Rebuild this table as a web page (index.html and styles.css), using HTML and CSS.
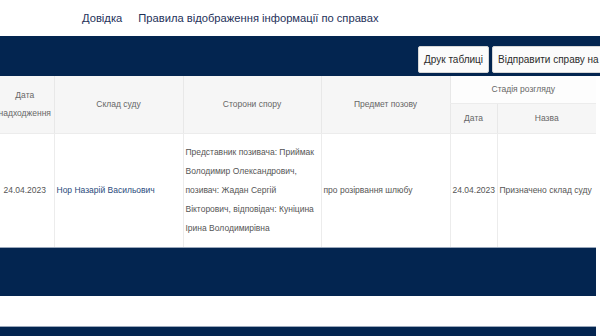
FILE: index.html
```html
<!DOCTYPE html>
<html lang="uk">
<head>
<meta charset="utf-8">
<link rel="stylesheet" href="styles.css">
</head>
<body>
<nav class="topnav">
  <a class="toplink" href="#">Довідка</a>
  <a class="toplink" href="#">Правила відображення інформації по справах</a>
</nav>
<div class="toolbar">
  <button class="btn">Друк таблиці</button>
  <button class="btn btn-wide">Відправити справу на</button>
</div>
<div class="tablewrap">
  <table class="cases">
    <colgroup>
      <col class="c1"><col class="c2"><col class="c3"><col class="c4"><col class="c5"><col class="c6">
    </colgroup>
    <thead>
      <tr class="hr1">
        <th rowspan="2" class="hgrey">Дата<br>надходження</th>
        <th rowspan="2" class="hgrey">Склад суду</th>
        <th rowspan="2" class="hgrey">Сторони спору</th>
        <th rowspan="2" class="hgrey">Предмет позову</th>
        <th colspan="2" class="hwhite hstage">Стадія розгляду</th>
      </tr>
      <tr class="hr2">
        <th class="hgrey hsub">Дата</th>
        <th class="hgrey hsub">Назва</th>
      </tr>
    </thead>
    <tbody>
      <tr class="brow">
        <td class="date1">24.04.2023</td>
        <td class="judgecell"><a class="judge" href="#">Нор Назарій Васильович</a></td>
        <td class="parties">Представник позивача: Приймак Володимир Олександрович, позивач: Жадан Сергій Вікторович, відповідач: Куніцина Ірина Володимирівна</td>
        <td>про розірвання шлюбу</td>
        <td>24.04.2023</td>
        <td>Призначено склад суду</td>
      </tr>
    </tbody>
  </table>
</div>
<div class="footbar"></div>
<div class="gap"></div>
<div class="footbar2"></div>
</body>
</html>
```

FILE: styles.css
```css
html, body {
  margin: 0;
  padding: 0;
  background: #ffffff;
  overflow: hidden;
  width: 600px;
  height: 336px;
  font-family: "Liberation Sans", Arial, sans-serif;
}

.topnav {
  height: 36px;
  display: flex;
  align-items: center;
  gap: 16px;
  padding-left: 82px;
  box-sizing: border-box;
}

.toplink {
  color: #1e3159;
  text-decoration: none;
  font-size: 11.2px;
}

.toolbar {
  height: 40px;
  background: #032550;
  display: flex;
  justify-content: flex-start;
  align-items: flex-start;
  gap: 3px;
  padding: 10px 0 0 418px;
  box-sizing: border-box;
  overflow: hidden;
  white-space: nowrap;
}

.btn {
  flex: none;
  height: 27px;
  padding: 0 5px;
  background: #fbfbfb;
  border: 1px solid #d6d6d6;
  border-radius: 2px;
  color: #2b2b2b;
  font-family: "Liberation Sans", Arial, sans-serif;
  font-size: 10px;
  text-align: left;
}

.btn-wide { padding-right: 20px; }

.tablewrap {
  width: 600px;
  margin-left: -4px;
}

.cases {
  width: 600px;
  table-layout: fixed;
  border-collapse: collapse;
  font-size: 8.5px;
  color: #555;
}

.c1 { width: 58px; }
.c2 { width: 129px; }
.c3 { width: 138px; }
.c4 { width: 129px; }
.c5 { width: 47px; }
.c6 { width: 99px; }

.cases th {
  font-weight: normal;
  color: #666;
  text-align: center;
  line-height: 18px;
  padding: 0 1px;
  border-left: 1px solid #e8e8e8;
  border-bottom: 1px solid #ececec;
}

.cases th:first-child { border-left: none; }

.hgrey { background: #f6f6f6; }
.hwhite { background: #fdfdfd; }

.hr1 { height: 27px; }
.hr2 { height: 30px; }
.hr2 th:first-child { border-left: 1px solid #e8e8e8; }

.hstage { padding-top: 4px; }
.hsub { padding-top: 3px; }

.brow { height: 114px; }

.cases td {
  vertical-align: middle;
  padding: 0 2px;
  line-height: 19px;
  border-left: 1px solid #ececec;
}

.cases td:first-child { border-left: none; }

.date1 { text-align: center; }

.judgecell { padding-left: 1px; }

.parties { padding: 4px 2px 0 3px; }

.judge {
  color: #2a4a7c;
  text-decoration: none;
}

.footbar {
  width: 596px;
  height: 49px;
  background: #032550;
  border-top: 1px solid #9aa8bb;
  box-sizing: border-box;
}

.gap { height: 30px; }

.footbar2 {
  width: 596px;
  height: 10px;
  background: #032550;
  border-top: 1px solid #9aa8bb;
  box-sizing: border-box;
}
```
